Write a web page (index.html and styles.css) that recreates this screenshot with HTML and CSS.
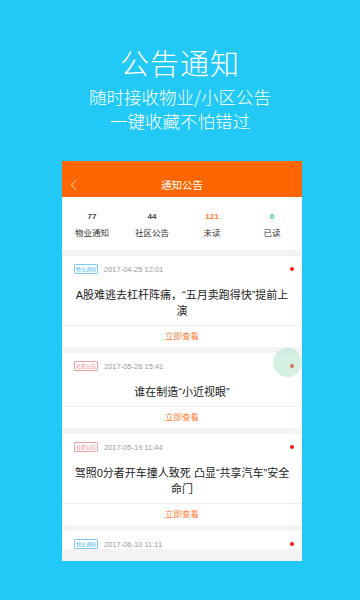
FILE: index.html
```html
<!DOCTYPE html>
<html lang="zh-CN">
<head>
    <meta charset="UTF-8">
    <meta name="viewport" content="width=device-width, initial-scale=1.0">
    <title>公告通知</title>
    <link rel="stylesheet" href="styles.css">
</head>
<body>
    <!-- Chamada no topo -->
    <div class="hero">
        <h1>公告通知</h1>
        <p>随时接收物业/小区公告</p>
        <p>一键收藏不怕错过</p>
    </div>

    <div class="phone">
        <div class="navbar">
            <svg class="back" width="8" height="12" viewBox="0 0 8 12"><path d="M6 1 L1.5 6 L6 11" fill="none" stroke="#ffd9c2" stroke-width="1"/></svg>
            <span>通知公告</span>
        </div>

        <div class="stats">
            <div class="stat"><b>77</b><span>物业通知</span></div>
            <div class="stat"><b>44</b><span>社区公告</span></div>
            <div class="stat"><b class="unread">121</b><span>未读</span></div>
            <div class="stat"><b class="read">0</b><span>已读</span></div>
        </div>

        <div class="card">
            <div class="meta"><span class="tag tag-wy">物业通知</span><span class="date">2017-04-25 12:01</span><i class="dot"></i></div>
            <div class="title">A股难逃去杠杆阵痛，“五月卖跑得快”提前上演</div>
            <div class="more">立即查看</div>
        </div>

        <div class="card">
            <div class="meta"><span class="tag tag-sq">社区公告</span><span class="date">2017-05-26 15:41</span><i class="dot"></i></div>
            <div class="title">谁在制造“小近视眼”</div>
            <div class="more">立即查看</div>
        </div>

        <div class="card">
            <div class="meta"><span class="tag tag-sq">社区公告</span><span class="date">2017-05-19 11:44</span><i class="dot"></i></div>
            <div class="title">驾照0分者开车撞人致死 凸显“共享汽车”安全<span class="nowrap">命门</span></div>
            <div class="more">立即查看</div>
        </div>

        <div class="card">
            <div class="meta"><span class="tag tag-wy">物业通知</span><span class="date">2017-06-10 11:11</span><i class="dot"></i></div>
        </div>

        <!-- Toque na tela -->
        <div class="touch"></div>
    </div>
</body>
</html>
```

FILE: styles.css
```css
body {
    margin: 0;
    padding: 0;
    height: 600px;
    overflow: hidden;
    background-color: #22c9f6;
    font-family: "Liberation Sans", "Noto Sans CJK SC", sans-serif;
    color: #333;
}
.hero {
    text-align: center;
    color: #fff;
    padding-top: 44px;
    font-family: "Noto Sans CJK SC", sans-serif;
}
.hero h1 {
    margin: 0 0 5px 0;
    font-size: 29px;
    line-height: 36px;
    font-weight: 300;
    letter-spacing: 1px;
}
.hero p {
    margin: 0;
    font-size: 17.5px;
    line-height: 24px;
    font-weight: 300;
}
.phone {
    position: relative;
    width: 240px;
    height: 400px;
    margin: 28px 0 0 62px;
    background-color: #f3f3f3;
    overflow: hidden;
}
.navbar {
    position: relative;
    height: 24px;
    padding-top: 12px;
    background-color: #ff6602;
    color: #fff;
    text-align: center;
    font-size: 10.5px;
    line-height: 24px;
}
.navbar .back {
    position: absolute;
    left: 8px;
    top: 18px;
}
.stats {
    display: flex;
    background-color: #fff;
    padding: 14px 0 11px 0;
    margin-bottom: 6px;
}
.stat {
    flex: 1;
    display: flex;
    flex-direction: column;
    align-items: center;
}
.stat b {
    font-size: 8px;
    line-height: 12px;
    color: #444;
}
.stat b.unread {
    color: #ff7a33;
}
.stat b.read {
    color: #2cbfa6;
}
.stat span {
    margin-top: 4px;
    font-size: 8.5px;
    line-height: 12px;
    color: #333;
}
.card {
    background-color: #fff;
    margin-bottom: 6px;
}
.meta {
    display: flex;
    align-items: center;
    height: 10px;
    padding: 8px 8px 0 12px;
}
.tag {
    display: inline-block;
    height: 8px;
    line-height: 8px;
    padding: 0 1px;
    border: 1px solid;
    border-radius: 1px;
    font-size: 5px;
}
.tag-wy {
    color: #4fb6ec;
    border-color: #7ccaf2;
}
.tag-sq {
    color: #f07a86;
    border-color: #f4a0aa;
}
.date {
    margin-left: 6px;
    font-size: 7.5px;
    color: #999;
}
.dot {
    margin-left: auto;
    width: 4px;
    height: 4px;
    border-radius: 50%;
    background-color: #f21c0c;
}
.title {
    padding: 13px 10px 6px 10px;
    text-align: center;
    font-size: 11px;
    line-height: 16px;
    color: #222;
    border-bottom: 1px solid #efefef;
}
.nowrap {
    white-space: nowrap;
}
.more {
    text-align: center;
    height: 21px;
    line-height: 21px;
    font-size: 8.5px;
    color: #ff7a33;
}
.touch {
    position: absolute;
    left: 211px;
    top: 187px;
    width: 29px;
    height: 29px;
    border-radius: 50%;
    background-color: rgba(165, 222, 192, 0.45);
}
```
